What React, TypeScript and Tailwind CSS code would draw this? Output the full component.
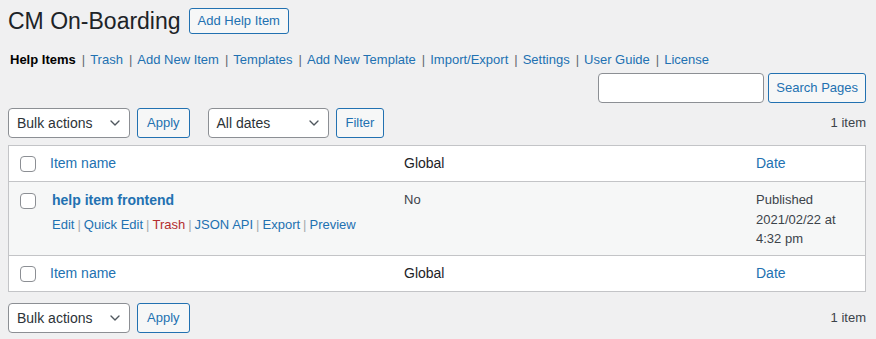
import { ChevronDown } from 'lucide-react';

const font = { fontFamily: '"Liberation Sans", Arial, sans-serif' };

function Select({ label, width }: { label: string; width: string }) {
  return (
    <div
      className={`${width} h-[30px] bg-white border border-[#8c8f94] rounded-[4px] flex items-center justify-between pl-2 pr-[6px] text-[14px] text-[#2c3338]`}
    >
      <span>{label}</span>
      <ChevronDown className="w-[16px] h-[16px] text-[#50575e]" strokeWidth={2} />
    </div>
  );
}

function Button({ label, className = '' }: { label: string; className?: string }) {
  return (
    <button
      className={`h-[30px] px-[9px] bg-[#f6f7f7] border border-[#2271b1] rounded-[3px] text-[13px] text-[#2271b1] ${className}`}
    >
      {label}
    </button>
  );
}

function Checkbox() {
  return <div className="w-4 h-4 bg-white border border-[#8c8f94] rounded-[4px]" />;
}

function HeaderRow({ top }: { top?: boolean }) {
  return (
    <div
      className={`grid grid-cols-[31px_354px_352px_1fr] h-[36px] items-center bg-white ${
        top ? 'border-b border-[#c3c4c7]' : 'border-t border-[#c3c4c7]'
      }`}
    >
      <div className="pl-[11px]">
        <Checkbox />
      </div>
      <div className="px-[10px] text-[14px] text-[#2271b1]">Item name</div>
      <div className="px-[10px] text-[14px] text-[#1d2327]">Global</div>
      <div className="px-[10px] text-[14px] text-[#2271b1]">Date</div>
    </div>
  );
}

const actions = ['Edit', 'Quick Edit', 'Trash', 'JSON API', 'Export', 'Preview'];
const subnav = ['Trash', 'Add New Item', 'Templates', 'Add New Template', 'Import/Export', 'Settings', 'User Guide', 'License'];

export default function App() {
  return (
    <div className="w-[876px] h-[339px] bg-[#f0f0f1] text-[#3c434a] pl-2 pr-[10px] pt-[8px] overflow-hidden" style={font}>
      {/* Title */}
      <div className="flex items-center h-[26px]">
        <h1 className="text-[23px] text-[#1d2327] leading-none">CM On-Boarding</h1>
        <button className="ml-[8px] h-[26px] px-[8px] bg-[#f6f7f7] border border-[#2271b1] rounded-[3px] text-[13px] font-medium text-[#2271b1]">
          Add Help Item
        </button>
      </div>

      {/* Sub navigation */}
      <div className="mt-[13px] pl-[2px] text-[13px] text-[#646970] h-[26px] flex items-center">
        <span className="font-bold text-[#000]">Help Items</span>
        {subnav.map(s => (
          <span key={s}>
            <span className="ml-[6px] mr-[5px]">|</span>
            <span className="text-[#2271b1]">{s}</span>
          </span>
        ))}
      </div>

      {/* Search */}
      <div className="flex justify-end gap-1">
        <div className="w-[166px] h-[30px] bg-white border border-[#8c8f94] rounded-[4px]" />
        <Button label="Search Pages" className="!px-[7px]" />
      </div>

      {/* Top tablenav */}
      <div className="flex items-center mt-[5px] h-[30px]">
        <Select label="Bulk actions" width="w-[122px]" />
        <Button label="Apply" className="ml-[7px]" />
        <div className="ml-[18px]">
          <Select label="All dates" width="w-[121px]" />
        </div>
        <Button label="Filter" className="ml-[7px]" />
        <span className="ml-auto text-[13px]">1 item</span>
      </div>

      {/* Table */}
      <div className="mt-[7px] border border-[#c3c4c7] bg-white">
        <HeaderRow top />
        <div className="grid grid-cols-[31px_354px_352px_1fr] bg-[#f6f7f7] text-[13px] leading-[19.5px] h-[73px]">
          <div className="pl-[11px] pt-[11px]">
            <Checkbox />
          </div>
          <div className="px-[10px] pt-[9px] pl-[12px]">
            <div className="text-[14px] font-bold text-[#2271b1] leading-[19px]">help item frontend</div>
            <div className="mt-[5px] text-[#2271b1]">
              {actions.map((a, i) => (
                <span key={a}>
                  {i > 0 && <span className="text-[#a7aaad] mx-[3px]">|</span>}
                  <span className={a === 'Trash' ? 'text-[#b32d2e]' : ''}>{a}</span>
                </span>
              ))}
            </div>
          </div>
          <div className="px-[10px] pt-[8px]">No</div>
          <div className="px-[10px] pt-[8px]">
            Published
            <br />
            2021/02/22 at
            <br />
            4:32 pm
          </div>
        </div>
        <HeaderRow />
      </div>

      {/* Bottom tablenav */}
      <div className="flex items-center mt-[11px] h-[30px]">
        <Select label="Bulk actions" width="w-[122px]" />
        <Button label="Apply" className="ml-[7px]" />
        <span className="ml-auto text-[13px]">1 item</span>
      </div>
    </div>
  );
}
